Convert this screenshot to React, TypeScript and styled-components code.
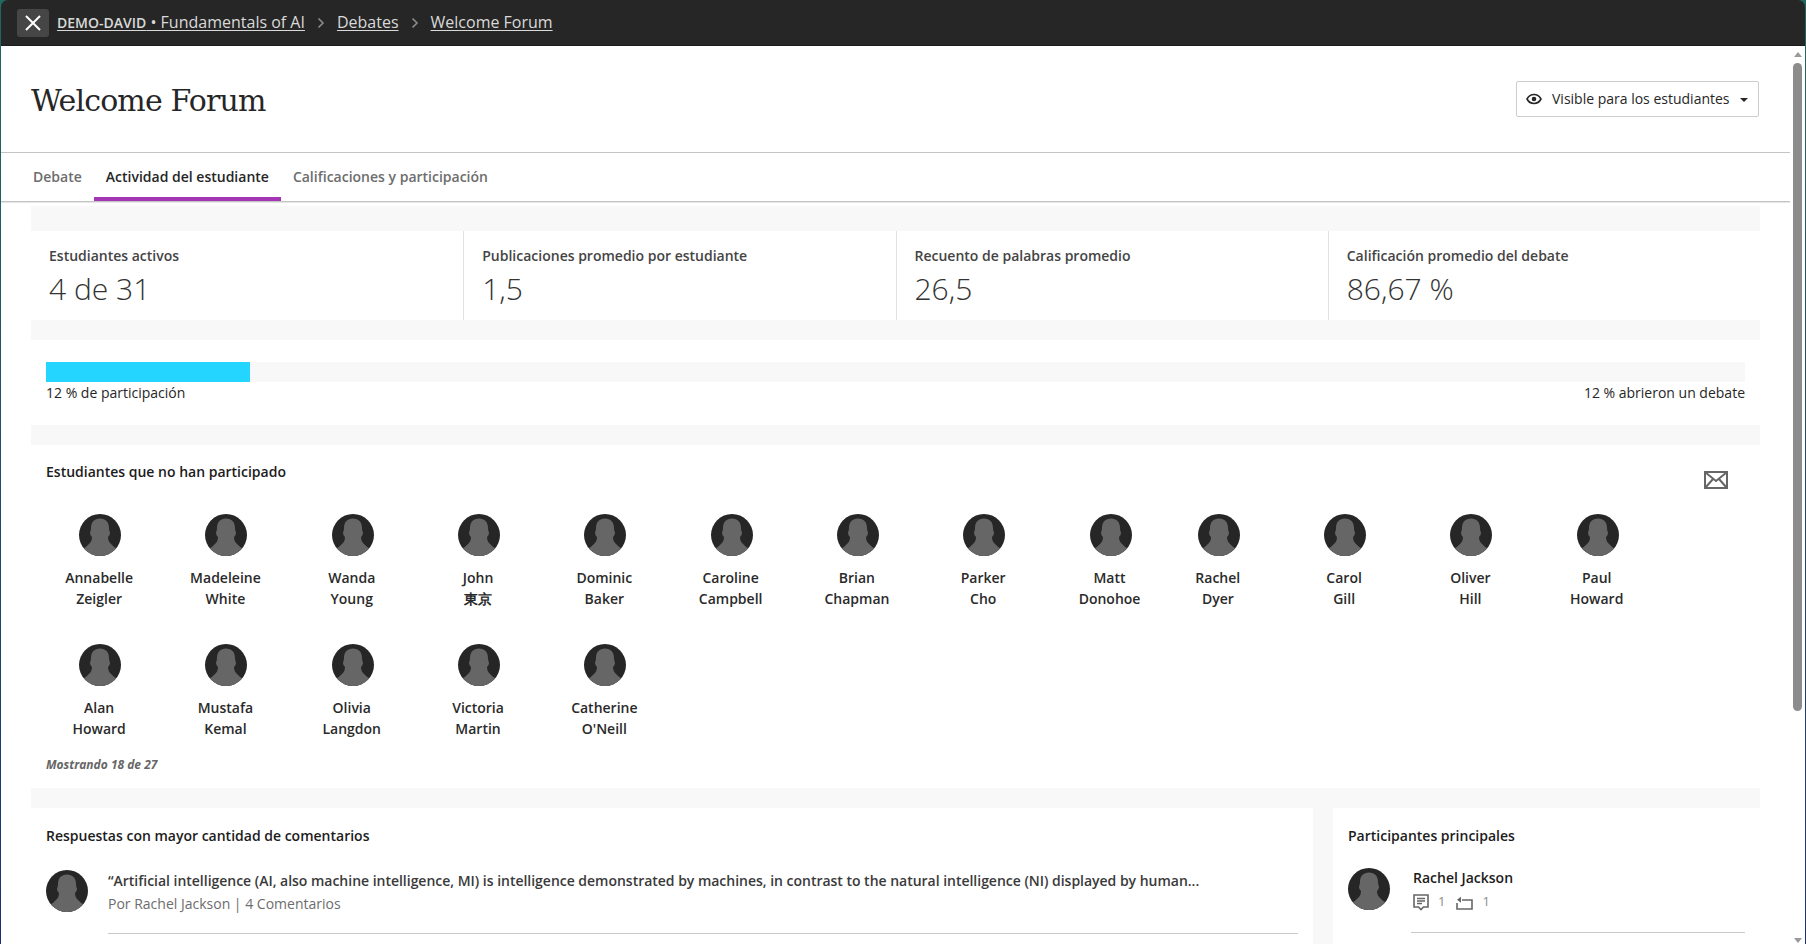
import React from "react";
import styled, { createGlobalStyle } from "styled-components";

const GlobalStyle = createGlobalStyle`
	html, body {
		margin: 0;
		padding: 0;
		height: 100%;
		overflow: hidden;
		background: #1f4f5c;
	}
	* {
		box-sizing: border-box;
	}
`;

const Shell = styled.div`
	width: 1806px;
	height: 944px;
	padding: 0 1px;
	background: linear-gradient(180deg, #1f6a5e 0%, #1d4f6c 50%, #1c2f78 100%);
	font-family: "Open Sans", "Noto Sans", sans-serif;
	color: #262626;
	display: flex;
	flex-direction: column;
	overflow: hidden;
`;

const TopBar = styled.header`
	height: 46px;
	flex: none;
	background: #262626;
	border-radius: 7px 7px 0 0;
	display: flex;
	align-items: center;
	padding: 0 0 0 16px;
	box-shadow: inset 0 -1px 0 #1c1c1c;
`;

const CloseButton = styled.button`
	width: 32px;
	height: 28px;
	border: 0;
	padding: 0;
	border-radius: 3px;
	background: #464646;
	display: flex;
	align-items: center;
	justify-content: center;
	margin-right: 8px;
`;

const Crumb = styled.a`
	color: #d9d9d9;
	font-size: 16px;
	line-height: 22px;
	margin-top: -2px;
	text-decoration: underline;
	text-underline-offset: 2px;
	white-space: nowrap;
`;

const CrumbStrong = styled.span`
	font-weight: 600;
	font-size: 14px;
`;

const CrumbSep = styled.span`
	display: flex;
	width: 32px;
	justify-content: center;
	color: #8c8c8c;
`;

const Body = styled.div`
	flex: 1;
	min-height: 0;
	display: flex;
	background: #fff;
`;

const Main = styled.main`
	width: 1789px;
	flex: none;
	overflow: hidden;
`;

const ScrollTrack = styled.div`
	flex: 1;
	display: flex;
	flex-direction: column;
	align-items: center;
	justify-content: space-between;
	padding: 6px 0 1px;
	background: #fff;
`;

const ScrollThumb = styled.div`
	width: 9px;
	height: 648px;
	margin-top: 6px;
	border-radius: 5px;
	background: #8c8c8c;
`;

const ScrollArrow = styled.div<{ $down?: boolean }>`
	width: 0;
	height: 0;
	border-left: 4px solid transparent;
	border-right: 4px solid transparent;
	${(p) => (p.$down ? "border-top: 5px solid #9a9a9a;" : "border-bottom: 5px solid #9a9a9a;")}
`;

const ScrollTop = styled.div`
	display: flex;
	flex-direction: column;
	align-items: center;
`;

const PageHead = styled.div`
	height: 107px;
	padding: 2px 31px 0 30px;
	display: flex;
	align-items: center;
	justify-content: space-between;
	border-bottom: 1px solid #c4c4c4;
`;

const Title = styled.h1`
	margin: 0;
	font-family: "DejaVu Serif", "Liberation Serif", serif;
	font-weight: 400;
	font-size: 30px;
	letter-spacing: -0.85px;
	color: #262626;
`;

const VisibilityButton = styled.button`
	width: 243px;
	height: 36px;
	margin-top: -3px;
	background: #fff;
	border: 1px solid #cdcdcd;
	border-radius: 2px;
	display: flex;
	align-items: center;
	padding: 0 10px 0 9px;
	font-family: inherit;
	font-size: 14px;
	color: #262626;
`;

const VisibilityLabel = styled.span`
	margin-left: 10px;
	flex: 1;
	text-align: left;
	white-space: nowrap;
`;

const Caret = styled.span`
	width: 0;
	height: 0;
	margin-top: 3px;
	border-left: 4px solid transparent;
	border-right: 4px solid transparent;
	border-top: 4px solid #262626;
`;

const Tabs = styled.nav`
	height: 49px;
	display: flex;
	padding-left: 20px;
	border-bottom: 1px solid #c4c4c4;
	box-shadow: 0 1px 0 #e6e6e6;
`;

const Tab = styled.div<{ $active?: boolean }>`
	height: 48px;
	padding: 2px 12px 0;
	display: flex;
	align-items: center;
	font-size: 14px;
	font-weight: 600;
	color: ${(p) => (p.$active ? "#262626" : "#6d6d6d")};
	border-bottom: 4px solid ${(p) => (p.$active ? "#a435b5" : "transparent")};
`;

const Content = styled.div`
	margin: 4px 30px 0 30px;
	background: #f8f8f8;
	padding-top: 25px;
	display: flex;
	flex-direction: column;
	gap: 20px;
`;

const Stats = styled.div`
	display: grid;
	grid-template-columns: repeat(4, 1fr);
	background: #fff;
	height: 89px;
`;

const Stat = styled.div`
	padding: 14px 18px 0;
	border-left: 1px solid #e2e2e2;
	&:first-child {
		border-left: 0;
	}
`;

const StatLabel = styled.div`
	font-size: 14px;
	font-weight: 600;
	line-height: 22px;
	color: #444;
`;

const StatValue = styled.div`
	margin-top: 2px;
	font-size: 30px;
	font-weight: 300;
	line-height: 40px;
	color: #333;
`;

const Panel = styled.section`
	background: #fff;
	padding: 0 15px;
`;

const ProgressPanel = styled(Panel)`
	height: 85px;
	padding-top: 22px;
`;

const Track = styled.div`
	height: 20px;
	background: #f8f8f8;
`;

const Fill = styled.div`
	height: 100%;
	background: #23d5ff;
`;

const ProgressLabels = styled.div`
	display: flex;
	justify-content: space-between;
	font-size: 14px;
	line-height: 22px;
	color: #262626;
`;

const StudentsPanel = styled(Panel)`
	height: 343px;
	padding-top: 17px;
	position: relative;
`;

const SectionTitle = styled.h2`
	margin: 0;
	font-size: 14px;
	font-weight: 600;
	line-height: 20px;
	color: #1c1c1c;
`;

const MailButton = styled.div`
	position: absolute;
	top: 26px;
	right: 32px;
	display: flex;
`;

const StudentGrid = styled.div`
	display: flex;
	flex-wrap: wrap;
	width: 1700px;
	margin: 32px 0 0 -9px;
	row-gap: 22px;
`;

const Student = styled.div<{ $tight?: boolean }>`
	width: 126.3px;
	height: 108px;
	display: flex;
	flex-direction: column;
	align-items: center;
	margin-left: ${(p) => (p.$tight ? "-18px" : "0")};
`;

const StudentName = styled.div`
	width: 110px;
	margin: 11px 2px 0 0;
	font-size: 14px;
	font-weight: 600;
	line-height: 21px;
	text-align: center;
	color: #2a2a2a;
`;

const Showing = styled.div`
	margin-top: 4px;
	font-size: 12px;
	font-weight: 700;
	font-style: italic;
	color: #666;
`;

const BottomRow = styled.div`
	display: grid;
	grid-template-columns: 1282px 427px;
	column-gap: 20px;
	height: 140px;
`;

const BottomCard = styled(Panel)`
	padding-top: 18px;
`;

const ReplyRow = styled.div`
	display: flex;
	margin-top: 24px;
	gap: 20px;
`;

const ReplyBody = styled.div`
	flex: 1;
	min-width: 0;
	border-bottom: 1px solid #c9c9c9;
	height: 64px;
`;

const ReplyText = styled.div`
	font-size: 14px;
	font-weight: 600;
	letter-spacing: -0.02px;
	line-height: 22px;
	color: #3a3a3a;
	white-space: nowrap;
`;

const ReplyMeta = styled.div`
	margin-top: 1px;
	font-size: 14px;
	line-height: 22px;
	color: #6d6d6d;
`;

const LeaderRow = styled.div`
	display: flex;
	margin-top: 22px;
	gap: 23px;
`;

const LeaderBody = styled.div`
	flex: 1;
	height: 65px;
	border-bottom: 1px solid #c9c9c9;
	margin-left: -2px;
	padding-left: 2px;
`;

const LeaderName = styled.div`
	font-size: 14px;
	font-weight: 600;
	line-height: 20px;
	color: #1c1c1c;
`;

const LeaderCounts = styled.div`
	display: flex;
	align-items: center;
	margin-top: 6px;
	color: #8c8c8c;
`;

const Count = styled.span`
	margin: 0 11px 0 9px;
	font-size: 13px;
	line-height: 16px;
	position: relative;
	top: -2px;
`;

function CloseIcon() {
	return (
		<svg width="18" height="18" viewBox="0 0 18 18" fill="none">
			<path d="M2 2l14 14M16 2L2 16" stroke="#fff" strokeWidth="2" />
		</svg>
	);
}

function Chevron() {
	return (
		<svg width="8" height="12" viewBox="0 0 8 12" fill="none">
			<path d="M1.5 1.5L6 6l-4.5 4.5" stroke="#8c8c8c" strokeWidth="1.6" />
		</svg>
	);
}

function EyeIcon() {
	return (
		<svg width="16" height="12" viewBox="0 0 16 12" fill="none">
			<path d="M1 6c1.6-3 4-4.5 7-4.5S13.4 3 15 6c-1.6 3-4 4.5-7 4.5S2.6 9 1 6z" stroke="#262626" strokeWidth="1.6" />
			<circle cx="8" cy="6" r="2.3" fill="#262626" />
		</svg>
	);
}

function MailIcon() {
	return (
		<svg width="24" height="18" viewBox="0 0 24 18" fill="none">
			<rect x="1" y="1" width="22" height="16" stroke="#666" strokeWidth="2" />
			<path d="M1.5 1.5L12 10 22.5 1.5M1.5 16.5L9 8M22.5 16.5L15 8" stroke="#666" strokeWidth="2" />
		</svg>
	);
}

function CommentIcon() {
	return (
		<svg width="16" height="17" viewBox="0 0 16 17" fill="none">
			<path d="M1 1h14v12h-4.5L8 15.5 5.5 13H1z" stroke="#666" strokeWidth="1.6" />
			<path d="M4 4.5h8M4 7h8M4 9.5h5" stroke="#666" strokeWidth="1.3" />
		</svg>
	);
}

function ReplyIcon() {
	return (
		<svg width="17" height="14" viewBox="0 0 17 14" fill="none">
			<path d="M6 4h10v9H1V7" stroke="#666" strokeWidth="1.6" />
			<path d="M5 .8v6L1 3.8z" fill="#666" />
		</svg>
	);
}

function Avatar() {
	return (
		<svg width="42" height="42" viewBox="0 0 42 42" style={{ flex: "none" }}>
			<defs>
				<clipPath id="avatar-clip">
					<circle cx="21" cy="21" r="21" />
				</clipPath>
			</defs>
			<circle cx="21" cy="21" r="21" fill="#262626" />
			<path
				clipPath="url(#avatar-clip)"
				d="M21 4.5C26.5 4.5 30 8 30 14C30 16 30.5 17 31 18.5C31 20.5 30 22 29 23C29 26 30 28 32 30C33.5 31.5 35 33 37 34L37 42L5 42L5 34C7 33 8.5 31.5 10 30C12 28 13 26 13 23C12 22 11 20.5 11 18.5C11.5 17 12 16 12 14C12 8 15.5 4.5 21 4.5Z"
				fill="#666"
			/>
		</svg>
	);
}

const students = [
	["Annabelle", "Zeigler"],
	["Madeleine", "White"],
	["Wanda", "Young"],
	["John", "東京"],
	["Dominic", "Baker"],
	["Caroline", "Campbell"],
	["Brian", "Chapman"],
	["Parker", "Cho"],
	["Matt", "Donohoe"],
	["Rachel", "Dyer"],
	["Carol", "Gill"],
	["Oliver", "Hill"],
	["Paul", "Howard"],
	["Alan", "Howard"],
	["Mustafa", "Kemal"],
	["Olivia", "Langdon"],
	["Victoria", "Martin"],
	["Catherine", "O'Neill"],
];

const stats = [
	["Estudiantes activos", "4 de 31"],
	["Publicaciones promedio por estudiante", "1,5"],
	["Recuento de palabras promedio", "26,5"],
	["Calificación promedio del debate", "86,67 %"],
];

export default function App() {
	return (
		<Shell>
			<GlobalStyle />
			<TopBar>
				<CloseButton>
					<CloseIcon />
				</CloseButton>
				<Crumb>
					<CrumbStrong>DEMO-DAVID</CrumbStrong> • Fundamentals of AI
				</Crumb>
				<CrumbSep>
					<Chevron />
				</CrumbSep>
				<Crumb>Debates</Crumb>
				<CrumbSep>
					<Chevron />
				</CrumbSep>
				<Crumb>Welcome Forum</Crumb>
			</TopBar>
			<Body>
				<Main>
					<PageHead>
						<Title>Welcome Forum</Title>
						<VisibilityButton>
							<EyeIcon />
							<VisibilityLabel>Visible para los estudiantes</VisibilityLabel>
							<Caret />
						</VisibilityButton>
					</PageHead>
					<Tabs>
						<Tab>Debate</Tab>
						<Tab $active>Actividad del estudiante</Tab>
						<Tab>Calificaciones y participación</Tab>
					</Tabs>
					<Content>
						<Stats>
							{stats.map(([label, value]) => (
								<Stat key={label}>
									<StatLabel>{label}</StatLabel>
									<StatValue>{value}</StatValue>
								</Stat>
							))}
						</Stats>
						<ProgressPanel>
							<Track>
								<Fill style={{ width: "12%" }} />
							</Track>
							<ProgressLabels>
								<span>12 % de participación</span>
								<span>12 % abrieron un debate</span>
							</ProgressLabels>
						</ProgressPanel>
						<StudentsPanel>
							<SectionTitle>Estudiantes que no han participado</SectionTitle>
							<MailButton>
								<MailIcon />
							</MailButton>
							<StudentGrid>
								{students.map(([first, last]) => (
									<Student key={first + last} $tight={first === "Rachel"}>
										<Avatar />
										<StudentName>
											{first}
											<br />
											{last}
										</StudentName>
									</Student>
								))}
							</StudentGrid>
							<Showing>Mostrando 18 de 27</Showing>
						</StudentsPanel>
						<BottomRow>
							<BottomCard>
								<SectionTitle>Respuestas con mayor cantidad de comentarios</SectionTitle>
								<ReplyRow>
									<Avatar />
									<ReplyBody>
										<ReplyText>
											“Artificial intelligence (AI, also machine intelligence, MI) is intelligence demonstrated by machines, in contrast to the natural intelligence (NI) displayed by human...
										</ReplyText>
										<ReplyMeta>Por Rachel Jackson | 4 Comentarios</ReplyMeta>
									</ReplyBody>
								</ReplyRow>
							</BottomCard>
							<BottomCard>
								<SectionTitle>Participantes principales</SectionTitle>
								<LeaderRow>
									<Avatar />
									<LeaderBody>
										<LeaderName>Rachel Jackson</LeaderName>
										<LeaderCounts>
											<CommentIcon />
											<Count>1</Count>
											<ReplyIcon />
											<Count>1</Count>
										</LeaderCounts>
									</LeaderBody>
								</LeaderRow>
							</BottomCard>
						</BottomRow>
					</Content>
				</Main>
				<ScrollTrack>
					<ScrollTop>
						<ScrollArrow />
						<ScrollThumb />
					</ScrollTop>
					<ScrollArrow $down />
				</ScrollTrack>
			</Body>
		</Shell>
	);
}
